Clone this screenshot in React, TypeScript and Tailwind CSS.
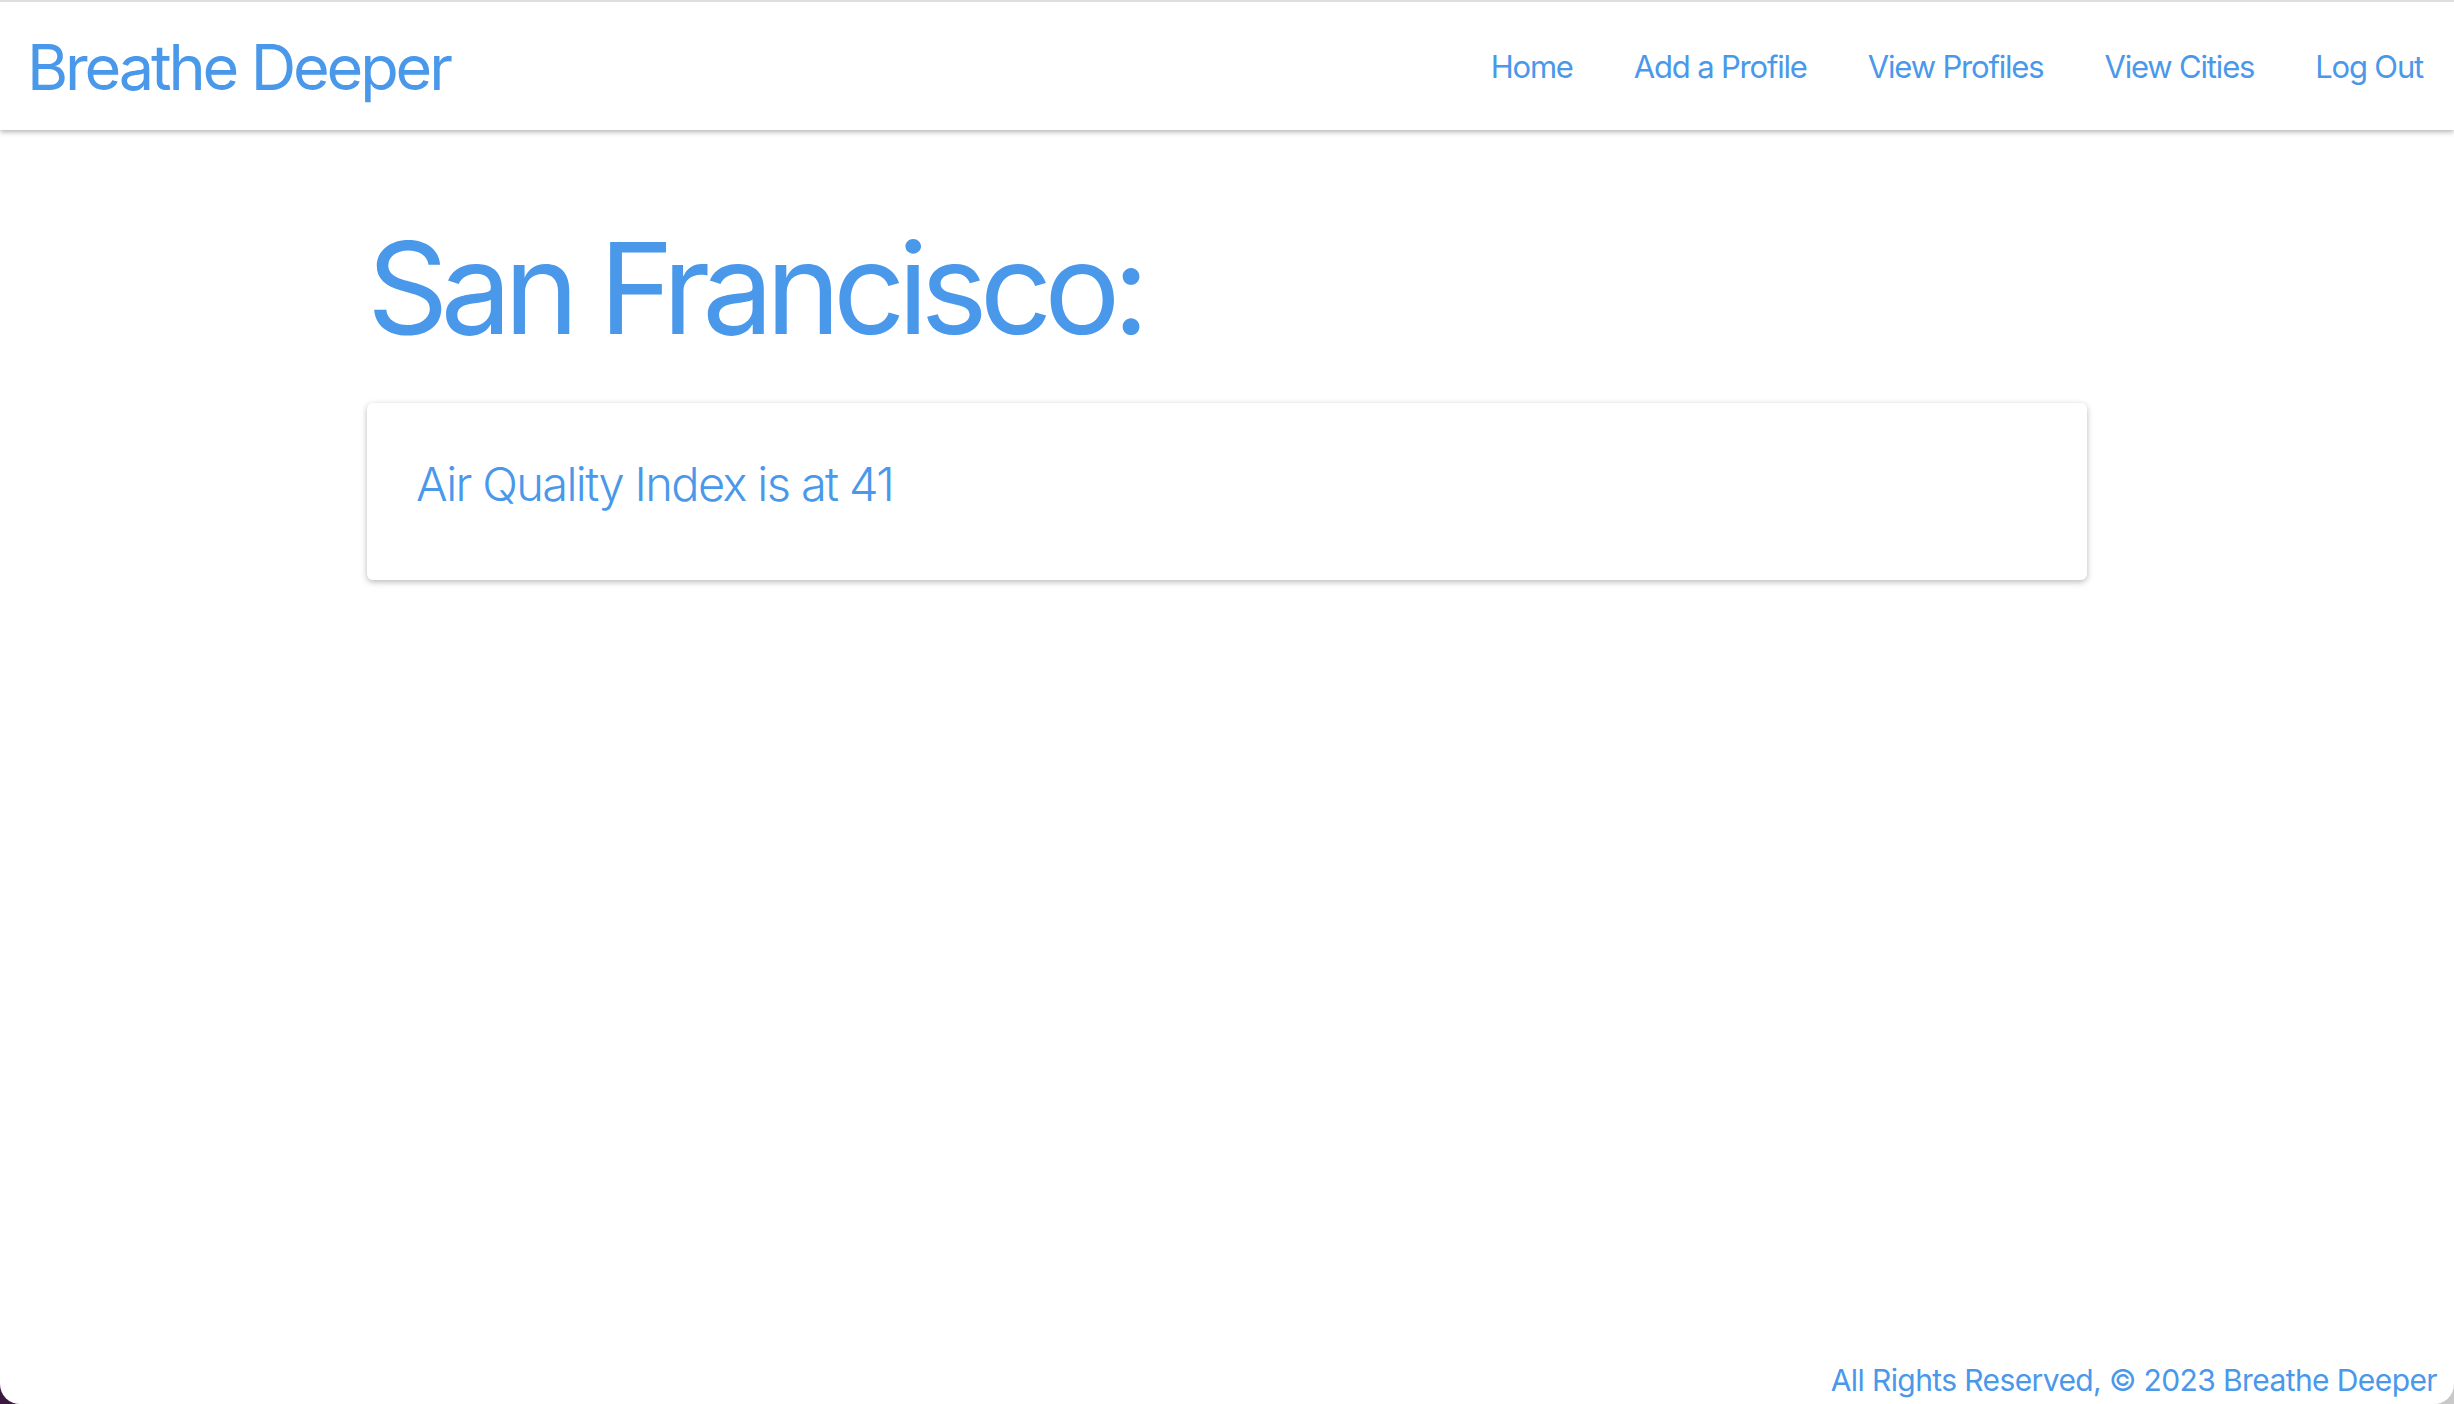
import React from 'react';

const links = ['Home', 'Add a Profile', 'View Profiles', 'View Cities', 'Log Out'];

const App: React.FC = () => {
  return (
    <div className="h-screen bg-gradient-to-r from-[#3a1840] to-[#c9c9c9] font-['Inter',sans-serif] text-[#4a98ea]">
      <div className="flex h-full flex-col overflow-hidden rounded-b-[20px] bg-white">
        <header className="relative z-10 flex h-[130px] shrink-0 items-center justify-between border-t-2 border-[#dedede] bg-white pl-[27px] pr-[31px] shadow-[0_2px_5px_rgba(0,0,0,0.3)]">
          <a className="pt-[2px] text-[63px] leading-none tracking-[-0.05em]">Breathe Deeper</a>
          <nav className="flex items-center">
            {links.map((l) => (
              <a key={l} className="pl-[61px] text-[31px] leading-none tracking-[-0.038em]">
                {l}
              </a>
            ))}
          </nav>
        </header>

        <main className="mx-auto w-[1720px] flex-1">
          <h1 className="mt-[78px] text-[127px] leading-[160px] tracking-[-0.062em]">San Francisco:</h1>
          <div className="mt-[35px] flex h-[177px] items-center rounded-md bg-white px-[49px] pb-[16px] shadow-[0_2px_6px_rgba(0,0,0,0.28)]">
            <p className="text-[47px] font-light leading-none tracking-[-0.035em]">Air Quality Index is at 41</p>
          </div>
        </main>

        <footer className="flex justify-end pb-[4px] pr-[17px]">
          <p className="text-[30px] leading-[40px] tracking-[-0.02em]">All Rights Reserved, © 2023 Breathe Deeper</p>
        </footer>
      </div>
    </div>
  );
};

export default App;
